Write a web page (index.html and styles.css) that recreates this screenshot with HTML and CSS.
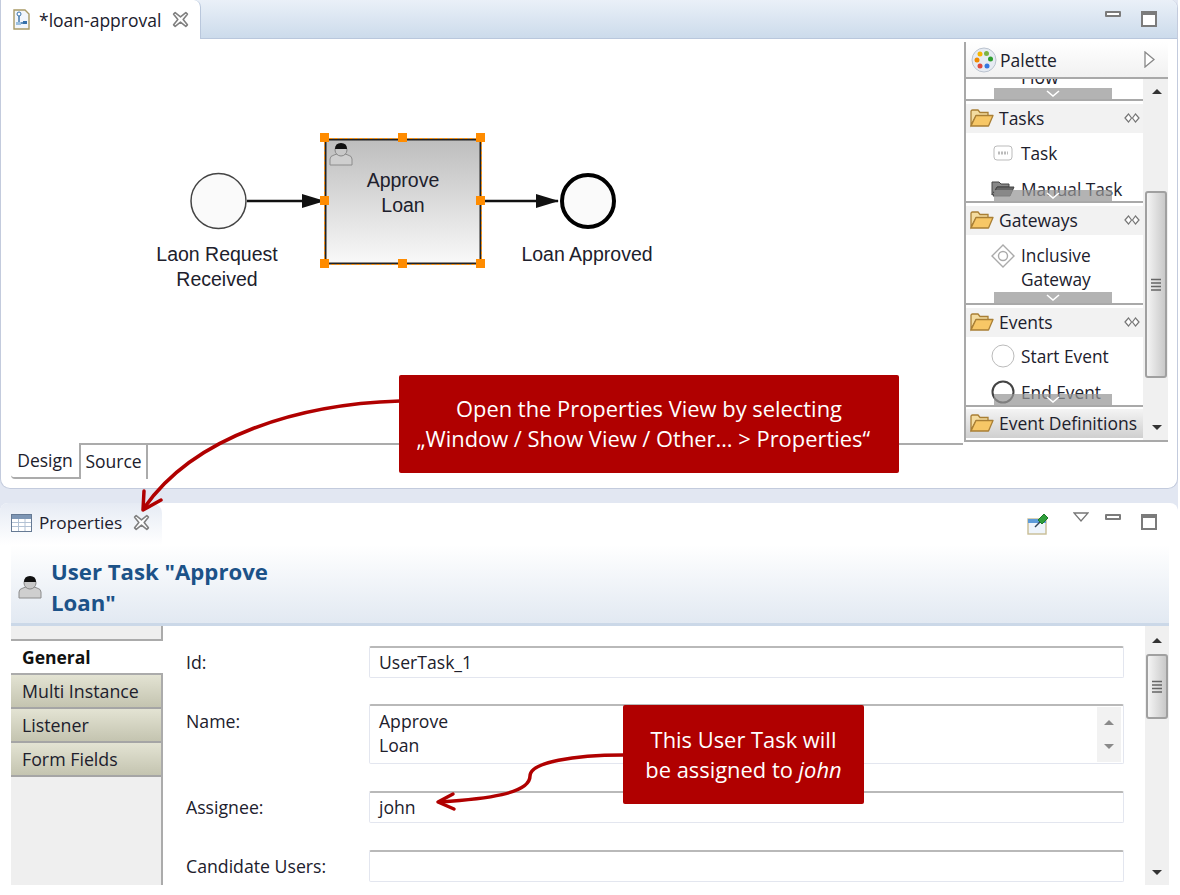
FILE: index.html
```html
<!DOCTYPE html>
<html lang="en">

<head>
    <meta charset="UTF-8">
    <title>loan-approval</title>
    <link rel="stylesheet" href="styles.css">
</head>

<body>
    <svg class="defs" width="0" height="0">
        <defs>
            <symbol id="close" viewBox="0 0 16 16">
                <path d="M1.500 3 3 1.500 8 5.500 13 1.500 14.500 3 10.500 8 14.500 13 13 14.500 8 10.500 3 14.500 1.500 13 5.500 8Z" fill="#fff" stroke="#808080" stroke-width="1.500" stroke-linejoin="round" />
            </symbol>
            <symbol id="folder" viewBox="0 0 24 20">
                <path d="M1 17V3.500Q1 2 2.500 2H8L10 4.500H18V8H6L1 17Z" fill="#f4dca0" stroke="#a97f35" stroke-width="1.300" />
                <path d="M1 18 6 7.500H23L18.500 18Z" fill="#f7c766" stroke="#a97f35" stroke-width="1.300" stroke-linejoin="round" />
            </symbol>
            <symbol id="collapse" viewBox="0 0 16 12">
                <path d="M1 6 4.500 2 7.500 6 4.500 10ZM8.500 6 11.500 2 15 6 11.500 10Z" fill="#fff" stroke="#777" stroke-width="1.200" />
            </symbol>
            <symbol id="user" viewBox="0 0 24 24">
                <path d="M1 23V17Q1 14 5 13L8 12H16L19 13Q23 14 23 17V23Z" fill="#cfcfcf" stroke="#8c8c8c" />
                <circle cx="12" cy="8" r="6" fill="#c8c8c8" stroke="#888" />
                <path d="M6 7Q6 1 12 1T18 7Z" fill="#111" />
            </symbol>
            <symbol id="chevron" viewBox="0 0 14 7">
                <path d="M1 1 7 6 13 1" fill="none" stroke="#fff" stroke-width="1.600" />
            </symbol>
            <symbol id="grip" viewBox="0 0 10 14">
                <path d="M0 1.500H10M0 5H10M0 8.500H10M0 12H10" stroke="#666" stroke-width="1.300" />
            </symbol>
        </defs>
    </svg>

    <div class="workbench">
        <section class="editor">
            <div class="tabbar">
                <div class="tab">
                    <svg class="file-icon" width="17" height="21" viewBox="0 0 17 21">
                        <path d="M1 1H12L16 5V20H1Z" fill="#f2f6fb" stroke="#a99a66" stroke-width="1.400" />
                        <circle cx="6" cy="5" r="2" fill="#fff" stroke="#3670a8" />
                        <path d="M6 7V14H13" fill="none" stroke="#3670a8" stroke-width="1.400" />
                        <rect x="3" y="13" width="5" height="3" fill="#9cc0df" />
                        <rect x="10" y="12" width="4" height="3" fill="#3670a8" />
                    </svg>
                    <span>*loan-approval</span>
                    <svg class="close-icon" width="17" height="17"><use href="#close" /></svg>
                </div>
                <div class="view-controls">
                    <span class="btn-min"></span>
                    <span class="btn-max"></span>
                </div>
            </div>

            <div class="editor-main">
                <div class="canvas">
                    <svg class="flow" width="965" height="403" viewBox="0 39 965 403">
                        <defs>
                            <linearGradient id="taskfill" x1="0" y1="0" x2="0" y2="1">
                                <stop offset="0" stop-color="#bdbdbd" />
                                <stop offset="1" stop-color="#f9f9f9" />
                            </linearGradient>
                        </defs>
                        <circle cx="218.500" cy="201" r="27.500" fill="#fafafa" stroke="#444" stroke-width="1.500" />
                        <path d="M247 201H322" stroke="#111" stroke-width="2.500" />
                        <path d="M302 194 325 201 302 208Z" fill="#111" />
                        <rect x="325.500" y="139.500" width="155" height="124" fill="url(#taskfill)" stroke="#222" stroke-width="2" />
                        <rect x="324.500" y="138.500" width="157" height="126" fill="none" stroke="#ff8c00" stroke-dasharray="3 2" />
                        <path d="M481 201H558" stroke="#111" stroke-width="2.500" />
                        <path d="M536 194 559 201 536 208Z" fill="#111" />
                        <circle cx="588" cy="201" r="26" fill="#fafafa" stroke="#000" stroke-width="4" />
                    </svg>
                    <svg class="task-user" width="24" height="24"><use href="#user" /></svg>
                    <div class="task-label">Approve<br>Loan</div>
                    <div class="event-label start-label">Laon Request<br>Received</div>
                    <div class="event-label end-label">Loan Approved</div>
                    <i class="handle h1"></i><i class="handle h2"></i><i class="handle h3"></i><i class="handle h4"></i>
                    <i class="handle h5"></i><i class="handle h6"></i><i class="handle h7"></i><i class="handle h8"></i>
                </div>

                <aside class="palette">
                    <div class="palette-head">
                        <svg width="26" height="26" viewBox="0 0 26 26">
                            <circle cx="13" cy="13" r="12" fill="#e6ebf2" stroke="#bbc3cf" />
                            <circle cx="9" cy="7" r="2.500" fill="#f5b400" />
                            <circle cx="15.500" cy="6.500" r="2.500" fill="#7cb342" />
                            <circle cx="19.500" cy="12" r="2.500" fill="#2e9e2e" />
                            <circle cx="6" cy="13" r="2.500" fill="#f08a00" />
                            <circle cx="9" cy="19" r="2.500" fill="#e0483c" />
                            <circle cx="16" cy="19" r="2.500" fill="#3578e0" />
                        </svg>
                        <span class="palette-title">Palette</span>
                        <svg class="palette-toggle" width="11" height="17" viewBox="0 0 11 17">
                            <path d="M1 1 10 8.500 1 16Z" fill="#fff" stroke="#888" stroke-width="1.300" />
                        </svg>
                    </div>
                    <div class="palette-body">
                        <div class="drawers">
                            <div class="drawer stub">
                                <div class="stub-text">Flow</div>
                                <div class="more"><svg width="14" height="7"><use href="#chevron" /></svg></div>
                            </div>
                            <div class="drawer tasks">
                                <div class="drawer-head">
                                    <svg width="24" height="20"><use href="#folder" /></svg><span>Tasks</span>
                                    <svg class="collapse" width="16" height="12"><use href="#collapse" /></svg>
                                </div>
                                <div class="item">
                                    <svg width="20" height="16" viewBox="0 0 20 16">
                                        <rect x="1" y="1" width="18" height="14" rx="3" fill="#fff" stroke="#bbb" />
                                        <path d="M5 8H15" stroke="#bbb" stroke-width="3" stroke-dasharray="2 1" />
                                    </svg>
                                    <span>Task</span>
                                </div>
                                <div class="item">
                                    <svg width="24" height="18" viewBox="0 0 24 18">
                                        <path d="M1 15V2H8L10 4H18V7H6L1 15Z" fill="#888" stroke="#444" />
                                        <path d="M2 16 6 7H23L19 16Z" fill="#666" stroke="#444" />
                                    </svg>
                                    <span>Manual Task</span>
                                </div>
                                <div class="more"><svg width="14" height="7"><use href="#chevron" /></svg></div>
                            </div>
                            <div class="drawer">
                                <div class="drawer-head">
                                    <svg width="24" height="20"><use href="#folder" /></svg><span>Gateways</span>
                                    <svg class="collapse" width="16" height="12"><use href="#collapse" /></svg>
                                </div>
                                <div class="item tall">
                                    <svg width="24" height="24" viewBox="0 0 24 24">
                                        <path d="M12 1 23 12 12 23 1 12Z" fill="#fff" stroke="#aaa" stroke-width="1.400" />
                                        <circle cx="12" cy="12" r="4.500" fill="#fff" stroke="#aaa" stroke-width="1.400" />
                                    </svg>
                                    <span>Inclusive<br>Gateway</span>
                                </div>
                                <div class="more"><svg width="14" height="7"><use href="#chevron" /></svg></div>
                            </div>
                            <div class="drawer">
                                <div class="drawer-head">
                                    <svg width="24" height="20"><use href="#folder" /></svg><span>Events</span>
                                    <svg class="collapse" width="16" height="12"><use href="#collapse" /></svg>
                                </div>
                                <div class="item">
                                    <svg width="24" height="24" viewBox="0 0 24 24"><circle cx="12" cy="12" r="11" fill="#fff" stroke="#bbb" /></svg>
                                    <span>Start Event</span>
                                </div>
                                <div class="item">
                                    <svg width="24" height="24" viewBox="0 0 24 24"><circle cx="12" cy="12" r="10.500" fill="#fff" stroke="#444" stroke-width="2" /></svg>
                                    <span>End Event</span>
                                </div>
                                <div class="more"><svg width="14" height="7"><use href="#chevron" /></svg></div>
                            </div>
                            <div class="drawer last">
                                <div class="drawer-head closed">
                                    <svg width="24" height="20"><use href="#folder" /></svg><span>Event Definitions</span>
                                </div>
                            </div>
                        </div>
                        <div class="scrollbar palette-scroll">
                            <span class="arrow up"></span>
                            <span class="thumb"><svg width="10" height="14"><use href="#grip" /></svg></span>
                            <span class="arrow down"></span>
                        </div>
                    </div>
                </aside>
            </div>

            <div class="sheet-tabs">
                <div class="sheet design">Design</div>
                <div class="sheet source">Source</div>
                <div class="sheet-rest"></div>
            </div>
        </section>

        <section class="properties">
            <div class="prop-top">
                <div class="prop-tab">
                    <svg width="21" height="18" viewBox="0 0 21 18">
                        <rect x="0.500" y="0.500" width="20" height="17" fill="#fff" stroke="#667a94" />
                        <rect x="1" y="1" width="19" height="4" fill="#7d96b5" />
                        <path d="M1 8.500H20M1 12.500H20M7.500 5V17M14 5V17" stroke="#b3c2d4" />
                    </svg>
                    <span>Properties</span>
                    <svg class="close-icon" width="17" height="17"><use href="#close" /></svg>
                </div>
                <div class="prop-tools">
                    <svg class="pin" width="22" height="22" viewBox="0 0 22 22">
                        <rect x="1" y="6" width="18" height="15" fill="#eef4fb" stroke="#c8bd94" stroke-width="1.400" />
                        <rect x="1" y="6" width="18" height="4" fill="#5d9bd8" />
                        <path d="M8 14 13 9" stroke="#345" stroke-width="1.500" />
                        <path d="M11 7 17 1 21 5 15 11Z" fill="#2f9e3a" stroke="#1c7a2a" />
                    </svg>
                    <svg class="menu-tri" width="16" height="10" viewBox="0 0 16 10">
                        <path d="M1 1H15L8 9Z" fill="#fff" stroke="#777" stroke-width="1.300" />
                    </svg>
                    <span class="btn-min"></span>
                    <span class="btn-max"></span>
                </div>
            </div>

            <header class="prop-header">
                <svg width="24" height="24"><use href="#user" /></svg>
                <h1>User Task "Approve<br>Loan"</h1>
            </header>

            <div class="prop-main">
                <nav class="side-tabs">
                    <div class="side-gap"></div>
                    <div class="side-tab active">General</div>
                    <div class="side-tab">Multi Instance</div>
                    <div class="side-tab">Listener</div>
                    <div class="side-tab">Form Fields</div>
                </nav>
                <div class="form">
                    <div class="row id-row"><label>Id:</label>
                        <div class="field">UserTask_1</div>
                    </div>
                    <div class="row name-row"><label>Name:</label>
                        <div class="field area">Approve<br>Loan
                            <div class="area-scroll"><span class="arrow up"></span><span class="arrow down"></span></div>
                        </div>
                    </div>
                    <div class="row"><label>Assignee:</label>
                        <div class="field">john</div>
                    </div>
                    <div class="row"><label>Candidate Users:</label>
                        <div class="field"></div>
                    </div>
                </div>
                <div class="scrollbar form-scroll">
                    <span class="arrow up"></span>
                    <span class="thumb"><svg width="10" height="14"><use href="#grip" /></svg></span>
                    <span class="arrow down"></span>
                </div>
            </div>
        </section>
    </div>

    <svg class="arrows" width="1180" height="895" viewBox="0 0 1180 895">
        <g fill="none" stroke="#b00000" stroke-width="3.500" stroke-linecap="round" stroke-linejoin="round">
            <path d="M400 401C300 404 195 435 144 508" />
            <path d="M144 491 143 510 161 500" />
            <path d="M623 755C575 755 530 762 530 776C530 794 485 799 440 802" />
            <path d="M453 794 438 802 454 809" />
        </g>
    </svg>

    <div class="callout callout-view">Open the Properties View by selecting<br>„Window / Show View / Other… &gt; Properties“&nbsp;&nbsp;</div>
    <div class="callout callout-john">This User Task will<br>be assigned to <em>john</em></div>
</body>

</html>
```
FILE: styles.css
```css
* {
    margin: 0;
    padding: 0;
    box-sizing: border-box;
}

body {
    width: 1180px;
    height: 895px;
    overflow: hidden;
    position: relative;
    background: #fff;
    font-family: "Open Sans", sans-serif;
    font-size: 16px;
    color: #20202c;
}

.defs {
    position: absolute;
}

.workbench {
    width: 1178px;
    height: 895px;
    display: flex;
    flex-direction: column;
    gap: 14px;
    background: #e2e7f2;
}

/* editor */
.editor {
    height: 489px;
    background: #fff;
    border: 1px solid #c3cbdd;
    border-top: none;
    border-radius: 0 8px 10px 10px;
    display: flex;
    flex-direction: column;
    overflow: hidden;
}

.tabbar {
    height: 39px;
    flex: none;
    display: flex;
    justify-content: space-between;
    background: linear-gradient(#eaf0f8, #ccdbeb);
    border-bottom: 1px solid #b9c7dc;
}

.tab {
    width: 200px;
    height: 39px;
    background: #fff;
    border-right: 1px solid #b9c7dc;
    border-radius: 0 7px 0 0;
    display: flex;
    align-items: center;
    padding-left: 12px;
    font-size: 17.500px;
}

.tab span {
    margin-left: 9px;
    white-space: nowrap;
}

.close-icon {
    margin-left: 11px;
    flex: none;
}

.view-controls {
    display: flex;
    align-items: flex-start;
    gap: 20px;
    padding: 11px 20px 0 0;
}

.btn-min {
    width: 16px;
    height: 6px;
    border: 2px solid #7b7b7b;
    border-radius: 1px;
    background: #fff;
}

.btn-max {
    width: 16px;
    height: 16px;
    border: 2px solid #7b7b7b;
    border-top-width: 4px;
    background: #fff;
}

.editor-main {
    height: 403px;
    flex: none;
    display: flex;
}

.canvas {
    width: 963px;
    flex: none;
    position: relative;
}

.flow {
    position: absolute;
    left: -1px;
    top: 0;
}

.task-user {
    position: absolute;
    left: 328px;
    top: 103px;
}

.task-label,
.event-label {
    position: absolute;
    font-family: "Liberation Sans", sans-serif;
    font-size: 19.500px;
    line-height: 25px;
    text-align: center;
    white-space: nowrap;
}

.task-label {
    left: 324px;
    width: 156px;
    top: 129px;
}

.start-label {
    left: 116px;
    width: 200px;
    top: 203px;
}

.end-label {
    left: 486px;
    width: 200px;
    top: 203px;
}

.handle {
    position: absolute;
    width: 9px;
    height: 9px;
    background: #ff8c00;
}

.h1 { left: 319px; top: 94px; }
.h2 { left: 397px; top: 94px; }
.h3 { left: 475px; top: 94px; }
.h4 { left: 319px; top: 157px; }
.h5 { left: 475px; top: 157px; }
.h6 { left: 319px; top: 220px; }
.h7 { left: 397px; top: 220px; }
.h8 { left: 475px; top: 220px; }

/* palette */
.palette {
    width: 204px;
    height: 400px;
    margin-top: 3px;
    flex: none;
    border-left: 2px solid #a9a9a9;
    border-bottom: 2px solid #a9a9a9;
    display: flex;
    flex-direction: column;
}

.palette-head {
    height: 37px;
    flex: none;
    display: flex;
    align-items: center;
    padding-left: 5px;
    background: linear-gradient(#fff, #f1f1f1);
    border-bottom: 2px solid #a9a9a9;
}

.palette-title {
    margin-left: 3px;
    font-size: 17.500px;
}

.palette-toggle {
    margin-left: auto;
    margin-right: 13px;
}

.palette-body {
    flex: 1;
    display: flex;
    min-height: 0;
}

.drawers {
    width: 177px;
    flex: none;
}

.drawer {
    height: 102px;
    position: relative;
    overflow: hidden;
    border-bottom: 2px solid #a9a9a9;
    padding-top: 3px;
}

.drawer.stub {
    height: 22px;
    padding-top: 0;
}

.drawer.last {
    height: 34px;
    border-bottom: none;
    padding-top: 2px;
}

.stub-text {
    margin: -14px 0 0 55px;
    font-size: 17.500px;
}

.drawer-head {
    height: 29px;
    display: flex;
    align-items: center;
    gap: 5px;
    padding: 0 0 2px 4px;
    margin-bottom: 1px;
    background: #f2f2f2;
    font-size: 17.500px;
}

.tasks .drawer-head {
    margin-bottom: 2px;
}

.drawer-head.closed {
    background: linear-gradient(#f4f4f4, #cfcfcf);
    white-space: nowrap;
}

.collapse {
    margin-left: auto;
    margin-right: 3px;
}

.item {
    height: 36px;
    display: flex;
    align-items: center;
    font-size: 17.300px;
    white-space: nowrap;
}

.item svg {
    width: 24px;
    margin-left: 25px;
    flex: none;
}

.item span {
    margin-left: 6px;
}

.item.tall {
    height: 60px;
    line-height: 24px;
    align-items: flex-start;
    padding-top: 8px;
}

.more {
    position: absolute;
    left: 28px;
    bottom: 0;
    width: 118px;
    height: 11px;
    background: rgba(150, 150, 150, 0.72);
    display: flex;
    justify-content: center;
    align-items: center;
}

/* scrollbars */
.scrollbar {
    background: #f0f0f0;
    position: relative;
    display: flex;
    flex-direction: column;
    align-items: center;
}

.palette-scroll {
    width: 25px;
    flex: none;
    padding: 10px 0 0 3px;
}

.arrow {
    width: 0;
    height: 0;
    border-left: 5px solid transparent;
    border-right: 5px solid transparent;
    flex: none;
}

.arrow.up {
    border-bottom: 5px solid #333;
}

.arrow.down {
    border-top: 5px solid #333;
}

.thumb {
    position: absolute;
    left: 2px;
    width: 22px;
    border: 2px solid #a0a0a0;
    border-radius: 3px;
    background: linear-gradient(90deg, #f4f4f4, #c9c9c9);
    display: flex;
    align-items: center;
    justify-content: center;
}

.palette-scroll .thumb {
    top: 112px;
    height: 187px;
}

.palette-scroll .arrow.down {
    margin-top: auto;
    margin-bottom: 10px;
}

/* sheet tabs */
.sheet-tabs {
    flex: 1;
    display: flex;
    padding: 1px 0 0 10px;
}

.sheet {
    height: 36px;
    display: flex;
    align-items: center;
    justify-content: center;
    font-size: 17.500px;
}

.design {
    width: 68px;
    border-bottom: 2px solid #ababab;
    border-radius: 0 0 0 4px;
}

.source {
    width: 69px;
    padding-bottom: 2px;
    border-top: 2px solid #ababab;
    border-left: 2px solid #ababab;
    border-right: 2px solid #ababab;
}

.sheet-rest {
    flex: 1;
    height: 2px;
    margin-right: 214px;
    background: #ababab;
}

/* properties */
.properties {
    flex: 1;
    background: #fff;
    border-radius: 8px 8px 0 0;
    display: flex;
    flex-direction: column;
    min-height: 0;
}

.prop-top {
    height: 42px;
    flex: none;
    display: flex;
    justify-content: space-between;
}

.prop-tab {
    width: 162px;
    height: 42px;
    padding-left: 11px;
    display: flex;
    align-items: center;
    padding-bottom: 3px;
    background: linear-gradient(#e6ebf4, #fff);
    border-radius: 8px 10px 0 0;
    font-size: 17.200px;
}

.prop-tab span {
    margin-left: 7px;
}

.prop-tools {
    display: flex;
    align-items: flex-start;
    padding-right: 21px;
}

.pin {
    margin-top: 10px;
}

.menu-tri {
    margin: 9px 0 0 24px;
}

.prop-tools .btn-min {
    margin: 11px 0 0 16px;
}

.prop-tools .btn-max {
    margin: 11px 0 0 20px;
}

.prop-header {
    height: 81px;
    flex: none;
    margin: 0 9px 0 11px;
    display: flex;
    align-items: center;
    gap: 9px;
    padding: 5px 0 0 7px;
    background: linear-gradient(#fff, #e2e9f2);
    border-bottom: 3px solid #cbd8e8;
}

.prop-header h1 {
    font-size: 22.200px;
    line-height: 31px;
    font-weight: 700;
    color: #1c5288;
}

.prop-main {
    flex: 1;
    display: flex;
    min-height: 0;
    margin: 0 9px 10px 11px;
}

.side-tabs {
    width: 152px;
    flex: none;
    background: #efefef;
    border-right: 2px solid #ababab;
    position: relative;
}

.side-gap {
    height: 15px;
    border-bottom: 2px solid #ababab;
}

.side-tab {
    height: 34px;
    width: 150px;
    padding-left: 11px;
    display: flex;
    align-items: center;
    font-size: 17.800px;
    background: linear-gradient(#e3e3d3, #c4c4b0);
    border-bottom: 2px solid #a5a5a5;
}

.side-tab.active {
    width: 152px;
    background: #fff;
    border-bottom: 2px solid #ababab;
    font-size: 17.500px;
    font-weight: 700;
    color: #111;
}

.form {
    flex: 1;
    padding: 20px 21px 0 23px;
}

.row {
    display: flex;
    height: 32px;
    margin-bottom: 27px;
}

.id-row {
    margin-bottom: 26px;
}

.row label {
    width: 183px;
    flex: none;
    padding-top: 4px;
    font-size: 17.700px;
    line-height: 24px;
}

.field {
    flex: 1;
    position: relative;
    border: 1px solid #e3e6ef;
    border-top: 2px solid #b9b9b9;
    border-radius: 2px;
    padding: 2px 9px;
    font-size: 17.600px;
    line-height: 24px;
}

.name-row {
    height: 60px;
}

.name-row label {
    padding-top: 5px;
}

.field.area {
    padding-top: 3px;
}

.area-scroll {
    position: absolute;
    right: 2px;
    top: 1px;
    bottom: 1px;
    width: 24px;
    background: #f2f2f2;
    display: flex;
    flex-direction: column;
    align-items: center;
    justify-content: space-around;
    padding: 4px 0;
}

.area-scroll .arrow {
    border-bottom-color: #8a8a8a;
    border-top-color: #8a8a8a;
}

.form-scroll {
    width: 24px;
    flex: none;
    padding-top: 12px;
}

.form-scroll .thumb {
    top: 28px;
    left: 1px;
    height: 65px;
}

.form-scroll .arrow.down {
    margin-top: auto;
    margin-bottom: 10px;
}

/* annotations */
.arrows {
    position: absolute;
    left: 0;
    top: 0;
    pointer-events: none;
}

.callout {
    position: absolute;
    text-align: center;
    background: #b00000;
    color: #fff;
    border-radius: 2px;
    font-size: 21.900px;
    line-height: 30px;
}

.callout-view {
    left: 399px;
    top: 375px;
    width: 500px;
    height: 98px;
    padding-top: 19px;
}

.callout-john {
    left: 623px;
    top: 705px;
    width: 241px;
    height: 99px;
    padding-top: 20px;
}
```
